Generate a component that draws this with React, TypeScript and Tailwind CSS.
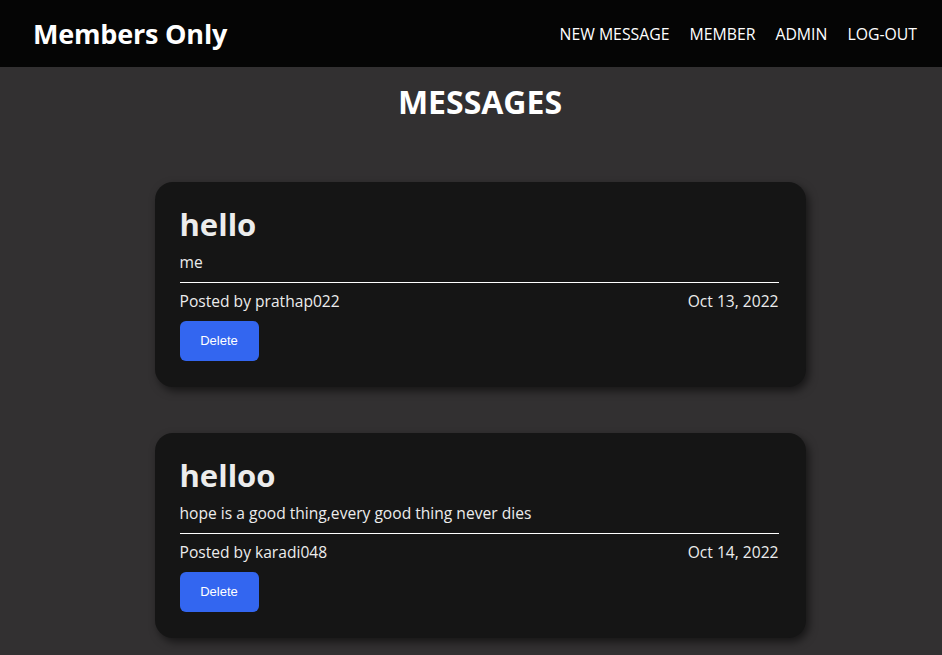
import React from "react";

type Message = {
  title: string;
  body: string;
  author: string;
  date: string;
};

const messages: Message[] = [
  { title: "hello", body: "me", author: "prathap022", date: "Oct 13, 2022" },
  {
    title: "helloo",
    body: "hope is a good thing,every good thing never dies",
    author: "karadi048",
    date: "Oct 14, 2022",
  },
];

function Header() {
  return (
    <header className="flex h-[67px] items-center justify-between bg-[#050505] pl-[33px] pr-[25px] pt-[2px]">
      <h1 className="text-[27px] font-bold tracking-[-0.2px] text-white">Members Only</h1>
      <nav className="flex items-center gap-[20px] text-[15.8px] text-white">
        <a href="#">NEW MESSAGE</a>
        <a href="#">MEMBER</a>
        <a href="#">ADMIN</a>
        <a href="#">LOG-OUT</a>
      </nav>
    </header>
  );
}

function MessageCard({ msg }: { msg: Message }) {
  return (
    <div className="w-[651px] rounded-[18px] bg-[#151515] pl-[25px] pr-[27px] pt-[22px] pb-[26px] text-[#ececec] shadow-[3px_4px_8px_rgba(0,0,0,0.55)]">
      <h2 className="text-[31px] leading-[40px] font-bold">{msg.title}</h2>
      <p className="mt-[6px] text-[15.6px] leading-[24px]">{msg.body}</p>
      <hr className="mt-[8px] border-t border-white" />
      <div className="mt-[6px] flex justify-between text-[15.6px] leading-[24px]">
        <span>Posted by {msg.author}</span>
        <span>{msg.date}</span>
      </div>
      <button className="mt-[8px] block h-[40px] w-[79px] rounded-[6px] bg-[#3366f0] text-[13px] text-white [font-family:'Liberation_Sans',Arial,sans-serif]">
        Delete
      </button>
    </div>
  );
}

export default function App() {
  return (
    <div className="min-h-screen bg-[#323031] [font-family:'Open_Sans',sans-serif]">
      <Header />
      <main className="flex flex-col items-center gap-[46px] pl-[18px] pb-[40px]">
        <h2 className="mt-[18px] mb-[17px] text-[32px] leading-[34px] font-bold text-white">MESSAGES</h2>
        {messages.map((m) => (
          <MessageCard key={m.title} msg={m} />
        ))}
      </main>
    </div>
  );
}
